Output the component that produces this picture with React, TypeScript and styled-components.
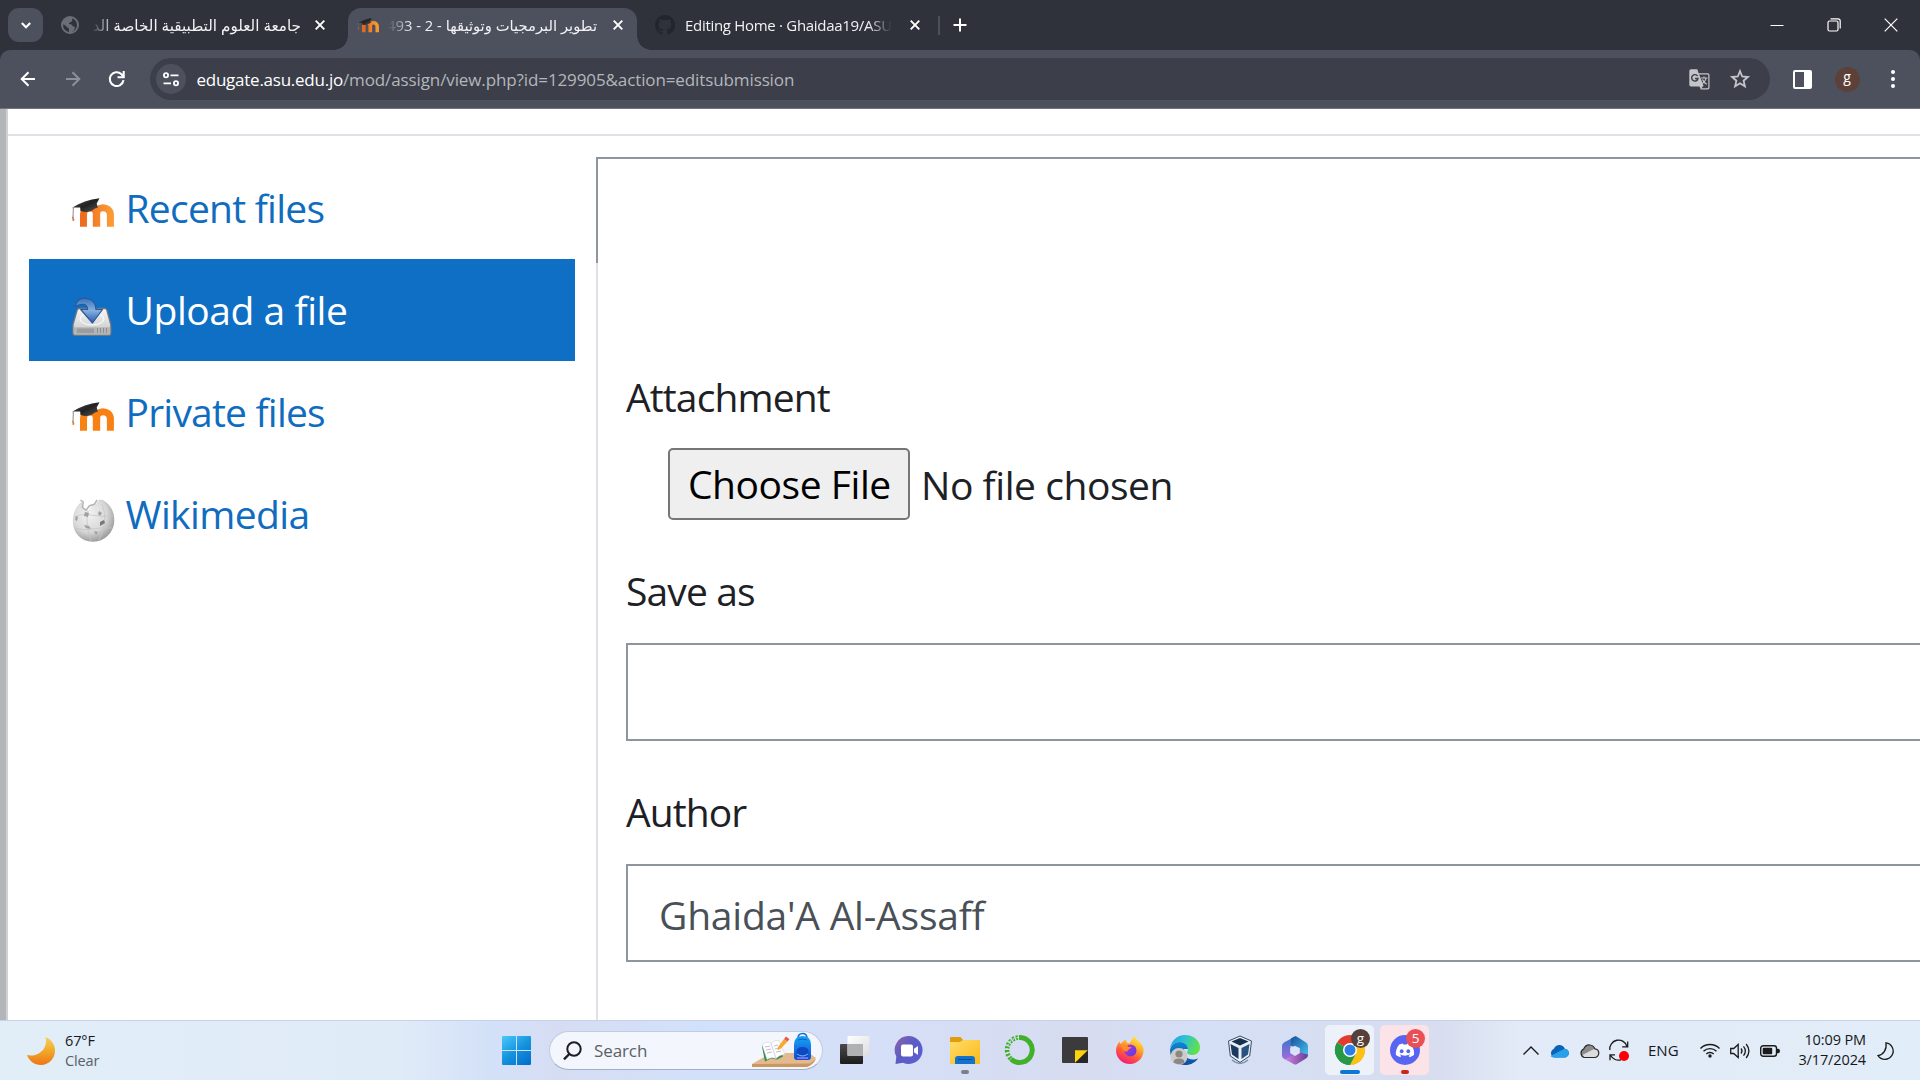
import React from "react";
import styled, { createGlobalStyle } from "styled-components";

const Global = createGlobalStyle`
  *, *::before, *::after { box-sizing: border-box; }
  body { margin: 0; background: #fff; overflow: hidden; font-family: "Open Sans", "Noto Sans", "DejaVu Sans", sans-serif; }
  svg { display: block; flex: none; overflow: visible; }
`;

const Screen = styled.div`
  display: flex;
  flex-direction: column;
  width: 1920px;
  height: 1080px;
  overflow: hidden;
`;

/* ---------- browser chrome ---------- */

const TabStrip = styled.header`
  display: flex;
  height: 50px;
  flex: none;
  padding-left: 8px;
  background: #2f323a;
`;

const TabSearch = styled.button`
  display: grid;
  place-items: center;
  width: 35px;
  height: 34px;
  margin: 8px 18px 0 0;
  padding: 0;
  border: 0;
  border-radius: 11px;
  background: #4d515e;
`;

const Tab = styled.div<{ $width: number; $active?: boolean }>`
  position: relative;
  display: flex;
  align-items: center;
  width: ${(p) => p.$width}px;
  height: 42px;
  margin-top: 8px;
  padding-bottom: 8px;
  border-radius: 13px 13px 0 0;
  background: ${(p) => (p.$active ? "#4d515e" : "transparent")};
  ${(p) =>
    p.$active &&
    `&::before, &::after {
      content: "";
      position: absolute;
      bottom: 0;
      width: 14px;
      height: 14px;
    }
    &::before { left: -14px; background: radial-gradient(circle at 0 0, transparent 13.5px, #4d515e 14px); }
    &::after { right: -14px; background: radial-gradient(circle at 100% 0, transparent 13.5px, #4d515e 14px); }`}
`;

const TabTitle = styled.div<{ $width: number; $rtl?: boolean; $size?: number; $gap: number }>`
  width: ${(p) => p.$width}px;
  margin-left: ${(p) => p.$gap}px;
  overflow: hidden;
  white-space: nowrap;
  color: #f1f2f4;
  font-size: ${(p) => p.$size ?? 15}px;
  line-height: 30px;
  direction: ${(p) => (p.$rtl ? "rtl" : "ltr")};
  letter-spacing: ${(p) => (p.$rtl ? "normal" : "-0.3px")};
  mask-image: linear-gradient(${(p) => (p.$rtl ? "to right" : "to left")}, transparent, #000 24px);
`;

const TabClose = styled.div<{ $gap: number }>`
  margin-left: ${(p) => p.$gap}px;
`;

const TabDivider = styled.div`
  width: 2px;
  height: 19px;
  margin: 16px 13px 0 8px;
  background: #4d515e;
`;

const NewTab = styled.div`
  padding-top: 18px;
`;

const WindowButtons = styled.div`
  display: flex;
  align-items: center;
  gap: 43px;
  height: 49px;
  margin-left: auto;
  padding-right: 22px;
`;

const ToolbarBack = styled.div`
  flex: none;
  background: #2f323a;
`;

const Toolbar = styled.div`
  display: flex;
  align-items: center;
  height: 59px;
  padding-left: 18px;
  border-bottom: 1px solid #70747f;
  border-radius: 10px 10px 0 0;
  background: #4d515e;
`;

const NavIcons = styled.div`
  display: flex;
  gap: 24.5px;
  width: 132px;
`;

const Omnibox = styled.div`
  display: flex;
  align-items: center;
  width: 1620px;
  height: 42px;
  padding-left: 6px;
  border-radius: 21px;
  background: #3c3f49;
`;

const SiteInfo = styled.div`
  display: grid;
  place-items: center;
  width: 30px;
  height: 30px;
  border-radius: 50%;
  background: #4d515e;
`;

const Url = styled.div`
  flex: 1;
  margin-left: 10.5px;
  color: #b3b6bc;
  font-size: 17px;
  letter-spacing: -0.11px;
  white-space: nowrap;
`;

const Host = styled.span`
  color: #fff;
  letter-spacing: -0.25px;
`;

const OmniIcons = styled.div`
  display: flex;
  align-items: center;
  gap: 20px;
  padding-right: 20px;
`;

const ToolbarEnd = styled.div`
  display: flex;
  align-items: center;
  margin-left: 22.5px;
`;

const Avatar = styled.div`
  display: grid;
  place-items: center;
  width: 25px;
  height: 25px;
  margin: 0 31px 0 23px;
  border-radius: 50%;
  background: #5d4037;
  color: #fff;
  font-size: 14px;
  line-height: 20px;
  padding-bottom: 5px;
`;

/* ---------- page ---------- */

const Page = styled.main`
  display: flex;
  flex: 1;
  min-height: 0;
  background: #fff;
`;

const Backdrop = styled.div`
  width: 8px;
  border-right: 2px solid #d0d1d2;
  background: #b2b6b9;
`;

const Dialog = styled.section`
  display: flex;
  flex-direction: column;
  flex: 1;
`;

const DialogTop = styled.div`
  height: 27px;
  border-bottom: 2px solid #dee2e6;
`;

const DialogBody = styled.div`
  display: flex;
  flex: 1;
  padding: 21px 0 0 21px;
`;

const RepoList = styled.nav`
  width: 567px;
`;

const Repo = styled.a<{ $active?: boolean; $spacing: number }>`
  display: flex;
  align-items: center;
  gap: 11.5px;
  width: 546px;
  height: 102px;
  padding: 0 0 2px 43px;
  background: ${(p) => (p.$active ? "#0f6fc5" : "transparent")};
  color: ${(p) => (p.$active ? "#fff" : "#0f6cbf")};
  font-size: 39px;
  letter-spacing: ${(p) => p.$spacing}px;
  white-space: nowrap;
`;

const RepoIcon = styled.span<{ $top: number }>`
  width: 42px;
  padding-top: ${(p) => p.$top}px;
`;

const FormPane = styled.div`
  flex: 1;
  display: flex;
  flex-direction: column;
`;

const PaneTop = styled.div`
  height: 106px;
  border: solid #8f959e;
  border-width: 2px 0 0 2px;
`;

const Form = styled.form`
  flex: 1;
  padding: 110px 0 0 28px;
  border-left: 2px solid #dee2e6;
`;

const Label = styled.label<{ $spacing: number }>`
  display: block;
  height: 48px;
  color: #1d2125;
  font-size: 39px;
  line-height: 48px;
  letter-spacing: ${(p) => p.$spacing}px;
`;

const FileRow = styled.div`
  display: flex;
  align-items: flex-start;
  padding: 27px 0 46px 42px;
`;

const ChooseButton = styled.button`
  width: 242px;
  height: 72px;
  padding: 0 0 0 18px;
  border: 2px solid #767676;
  border-radius: 5px;
  background: #efefef;
  color: #000;
  font: 39px/68px "Open Sans", sans-serif;
  text-align: left;
  letter-spacing: -0.45px;
  white-space: nowrap;
`;

const FileName = styled.span`
  margin-left: 11px;
  color: #1d2125;
  font-size: 39px;
  line-height: 73px;
  letter-spacing: -0.45px;
`;

const TextInput = styled.div`
  height: 98px;
  margin: 28px 0 47px;
  padding-left: 31px;
  border: 2px solid #8f959e;
  border-right: 0;
  color: #495057;
  font-size: 39px;
  line-height: 97px;
  letter-spacing: -0.22px;
`;

/* ---------- taskbar ---------- */

const Taskbar = styled.footer`
  display: flex;
  flex: none;
  height: 60px;
  border-top: 1px solid #c6d2e8;
  background: linear-gradient(90deg, #e1edf7 0, #e0ebf8 400px, #d3e1f8 490px, #d6ddf3 560px, #d2e1fa 700px, #d5dff7 880px, #d7dcf0 1080px, #d5dff5 1200px, #d8ddef 1440px, #e2ebf7 1520px, #e1edf8 1920px);
`;

const Weather = styled.div`
  display: flex;
  align-items: center;
  gap: 10px;
  width: 502px;
  padding-left: 27px;
`;

const Lines = styled.div<{ $end?: boolean }>`
  display: flex;
  flex-direction: column;
  padding-top: ${(p) => (p.$end ? 0 : 1)}px;
  padding-bottom: ${(p) => (p.$end ? 1 : 0)}px;
  color: #16181b;
  font-size: 14.5px;
  line-height: 20px;
  letter-spacing: -0.12px;
  text-align: ${(p) => (p.$end ? "right" : "left")};
`;

const Muted = styled.span`
  color: #5a6068;
`;

const StartButton = styled.div`
  width: 47px;
  padding-top: 15px;
`;

const SearchBox = styled.div`
  display: flex;
  align-items: center;
  width: 274px;
  height: 39px;
  margin: 10px 4px 0 0;
  padding: 0 2px 0 13px;
  border: 1px solid #c0cbe4;
  border-bottom-color: #a2adc6;
  border-radius: 20px;
  background: #f3f6fd;
`;

const SearchText = styled.span`
  flex: 1;
  margin-left: 12px;
  color: #5b5f66;
  font-size: 17px;
  letter-spacing: -0.1px;
`;

const Apps = styled.div`
  display: flex;
`;

const AppTile = styled.div<{ $tint?: string }>`
  position: relative;
  display: grid;
  place-items: center;
  width: 49px;
  height: 50px;
  margin: 4px 3px 0;
  border-radius: 5px;
  background: ${(p) => p.$tint ?? "transparent"};
`;

const Running = styled.i<{ $width: number; $color: string }>`
  position: absolute;
  left: calc(50% - ${(p) => p.$width / 2}px);
  bottom: 1px;
  width: ${(p) => p.$width}px;
  height: 4px;
  border-radius: 2px;
  background: ${(p) => p.$color};
`;

const Badge = styled.b<{ $color: string }>`
  position: absolute;
  top: 4px;
  right: 4px;
  width: 19px;
  height: 19px;
  border-radius: 50%;
  background: ${(p) => p.$color};
  color: #fff;
  font-size: 13.5px;
  font-weight: 500;
  line-height: 18px;
  text-align: center;
`;

const Tray = styled.div`
  display: flex;
  align-items: center;
  margin-left: auto;
  padding-right: 26px;
`;

const TrayIcons = styled.div<{ $gap: number; $after: number }>`
  display: flex;
  align-items: center;
  gap: ${(p) => p.$gap}px;
  margin-right: ${(p) => p.$after}px;
`;

const Lang = styled.span`
  width: 52px;
  padding-bottom: 2px;
  color: #16181b;
  font-size: 15px;
`;

const ClockWrap = styled.div`
  width: 88px;
  margin-right: 11px;
`;

/* ---------- drawings ---------- */

const Close = () => (
  <svg width="10" height="10" viewBox="0 0 10 10" stroke="#fff" strokeWidth="1.9"><path d="M.7.7l8.6 8.6M9.3.7L.7 9.3" /></svg>
);

const MoodleMark = ({ width, id, from, to }: { width: number; id: string; from: string; to: string }) => (
  <svg width={width} height={(width * 29) / 42} viewBox="0 0 42 29">
    <defs>
      <linearGradient id={id}><stop stopColor={from} /><stop offset="1" stopColor={to} /></linearGradient>
      <linearGradient id={id + "c"} x2="1" y2="1"><stop stopColor="#555" /><stop offset=".5" stopColor="#222" /><stop offset="1" stopColor="#555" /></linearGradient>
    </defs>
    <path d="M11.5 28.7V17c0-5 2.6-7.3 6-7.3S24.300 12 24.300 16v12.700M24.700 28.700V16c0-4 2.500-6.300 6.200-6.300s7.500 2.300 7.500 7.300v11.700" fill="none" stroke={`url(#${id})`} strokeWidth="7" />
    <path d="M.5 9.500C8 4.500 17 1.500 27.500.2L24.700 5.400l1.200 4.200-3.500 1.200c-4 3.600-9 4.200-14 2L8.200 9.600z" fill={`url(#${id}c)`} />
    <path d="M1.200 9.300C1.800 14 .2 17 1.800 22.300" fill="none" stroke="#777" strokeWidth=".9" />
    <path d="M.4 18.500l.7 4.500.9-1.500" fill="none" stroke={from} strokeWidth=".9" />
  </svg>
);

const UploadDrive = () => (
  <svg width="40" height="40" viewBox="0 0 40 40">
    <defs>
      <linearGradient id="drv" x2="0" y2="1"><stop stopColor="#f7f7f7" /><stop offset="1" stopColor="#c3c5c6" /></linearGradient>
      <linearGradient id="arr" x2="0" y2="1"><stop stopColor="#3c72b8" /><stop offset=".5" stopColor="#83b0e2" /><stop offset="1" stopColor="#2a5aa6" /></linearGradient>
    </defs>
    <path d="M7 11.500h26q1.200 0 1.800 1.500l4 14.500v9q0 1.700-1.700 1.700H2.800Q1 38.200 1 36.500v-9L5.200 13q.5-1.500 1.800-1.500z" fill="url(#drv)" stroke="#73777a" strokeWidth="1.300" />
    <ellipse cx="20" cy="22" rx="12" ry="6" fill="none" stroke="#fff" />
    <path d="M1.700 30.300h36.600v6.200q0 1-1 1H2.700q-1 0-1-1z" fill="#b3b5b6" />
    <path d="M5 31.500h17v4.500H5z" fill="#9a9da0" />
    <path d="M25.500 31v5M28.500 31v5M31.500 31v5M34.500 31v5" stroke="#8b8f92" />
    <path d="M3.500 9.500C4.500 3 9 .8 14 1.300c6.500.7 10 4.700 10 11.200h6.500L20.500 26 8.700 12.500h6.800c0-5-4.500-7-12-3z" fill="url(#arr)" stroke="#285a9e" strokeWidth="1.200" strokeLinejoin="round" />
  </svg>
);

const WikiGlobe = () => (
  <svg width="43" height="43" viewBox="0 0 43 43">
    <defs><radialGradient id="wg" cx=".4" cy=".35" r=".7"><stop stopColor="#f2f2f2" /><stop offset=".6" stopColor="#d8d8d8" /><stop offset="1" stopColor="#929292" /></radialGradient></defs>
    <path d="M10 2.500C4 7 .8 14 .8 21.500.8 34 9 42.700 21 42.700S42.300 33 42.300 21c0-9-4.300-16-11.500-20L27 .5l-3 4.500-4 1-3 5-5-1z" fill="url(#wg)" />
    <path d="M8.500 1l2.700 2-.8 5.500 3.600 2.700 3.500-4.500 5-1.500L25 1" fill="none" stroke="#b4b4b4" strokeWidth="1.500" />
    <g fill="none" stroke="#c6c6c6" strokeWidth=".8"><path d="M2 18q8-4 17-2t22 1M3 29q8 3 18 1t19-1M16 12q-3 14 3 30M30 5q7 16-3 36" /></g>
    <g fill="#a0a0a0"><path d="M13 13l4 1-1 4-4-1zM27 12l3 2-2 3-2-2zM12 26l5 1 2 3-5-1zM4 17l2 1-1 4-2-1zM22 32l4 1-2 3z" /><path d="M28 23l4-2 1 3-5 3z" fill="#777" /></g>
  </svg>
);

const Globe = () => (
  <svg width="18" height="18" viewBox="0 0 18 18">
    <circle cx="9" cy="9" r="8" fill="none" stroke="#6b6f75" strokeWidth="2" />
    <path d="M2 6C4 2.500 8 1 11.500 2.200 10.500 3.500 12 4 10.500 5.500S8 6 8 8c2 .3 3.500.5 3.500 2.200 1 .3 2.200.2 2.500 1.300-.5 2-1.500 3.500-3.500 4.500L8 16.500c.5-2-.5-3-.3-4.500C5 11.500 5.500 9 2 8.500z" fill="#6b6f75" />
  </svg>
);

const GitHub = () => (
  <svg width="20" height="20" viewBox="0 0 16 16" fill="#22262b">
    <path d="M8 0C3.580 0 0 3.580 0 8c0 3.540 2.290 6.530 5.470 7.590.4.070.55-.17.55-.38 0-.19-.01-.82-.01-1.490-2.010.37-2.530-.49-2.690-.94-.09-.23-.48-.94-.82-1.130-.28-.15-.68-.52-.01-.53.63-.01 1.080.58 1.230.82.72 1.210 1.870.87 2.330.66.070-.52.28-.87.51-1.070-1.780-.2-3.640-.89-3.640-3.950 0-.87.31-1.590.82-2.150-.08-.2-.36-1.020.08-2.120 0 0 .67-.21 2.200.82A7.600 7.600 0 018 3.870c.68 0 1.360.09 2 .27 1.530-1.040 2.200-.82 2.200-.82.44 1.100.16 1.920.08 2.120.51.56.82 1.270.82 2.150 0 3.070-1.870 3.750-3.650 3.950.29.25.54.73.54 1.480 0 1.070-.01 1.930-.01 2.200 0 .21.15.46.55.38A8.010 8.010 0 0016 8c0-4.420-3.580-8-8-8z" />
  </svg>
);

const BackArrow = ({ color, flip }: { color: string; flip?: boolean }) => (
  <svg width="20" height="20" viewBox="0 0 20 20" fill="none" stroke={color} strokeWidth="2">
    <path d={flip ? "M3 10h13M9.500 3.200L16.300 10l-6.800 6.800" : "M17 10H4M10.500 3.200L3.700 10l6.800 6.800"} />
  </svg>
);

const Reload = () => (
  <svg width="20" height="20" viewBox="0 0 20 20" fill="none" stroke="#fff" strokeWidth="2.100">
    <path d="M16.500 11.200A6.900 6.900 0 1 1 14.300 5l2.300 2.700" /><path d="M16.700 2v6.200H10.500" />
  </svg>
);

const Tune = () => (
  <svg width="16" height="15" viewBox="0 0 16 15" fill="none" stroke="#fff" strokeWidth="1.800">
    <circle cx="3" cy="3.300" r="2.100" /><path d="M7.500 3.300h8M.5 11.300h7.500" /><circle cx="13" cy="11.300" r="2.100" />
  </svg>
);

const Translate = () => (
  <svg width="21" height="21" viewBox="0 0 21 21">
    <path d="M2 .3h6.300l1.300 4h9.200q1.700 0 1.700 1.700v12.700q0 1.700-1.700 1.700h-7l-1.300-3H2Q.3 17.400.3 15.700V2Q.3.300 2 .300z" fill="#c4c5c8" />
    <path d="M10.200 5.600h8.300q.8 0 .8.800v12q0 .8-.8.800h-6.200l2.200-2.400z" fill="#3c3f49" />
    <path d="M8.600 7.200A3.200 3.200 0 1 0 9 9.500H6" fill="none" stroke="#3c3f49" strokeWidth="1.400" />
    <path d="M12 9h6.500M15 7.500V9M17.200 9c-.5 2.500-2 4.300-4 5.700M13.500 10.500c.7 1.800 2.200 3.500 4.200 4.700" fill="none" stroke="#c4c5c8" strokeWidth="1.200" />
  </svg>
);

const Star = () => (
  <svg width="20" height="20" viewBox="0 0 20 20" fill="none" stroke="#c4c5c8" strokeWidth="1.800">
    <path d="M10 2.200l2.200 5.300 5.700.5-4.300 3.700 1.300 5.600L10 14.300l-4.900 3 1.300-5.600L2.100 8l5.700-.5z" />
  </svg>
);

const SidePanel = () => (
  <svg width="19" height="19" viewBox="0 0 19 19"><path d="M2 1h15q1 0 1 1v15q0 1-1 1H2q-1 0-1-1V2q0-1 1-1z" fill="none" stroke="#fff" strokeWidth="2" /><path d="M11 1h7v17h-7z" fill="#fff" /></svg>
);

const Dots = () => (
  <svg width="4" height="18" viewBox="0 0 4 18" fill="#fff"><circle cx="2" cy="2" r="2" /><circle cx="2" cy="9" r="2" /><circle cx="2" cy="16" r="2" /></svg>
);

const MoonColor = () => (
  <svg width="28" height="28" viewBox="0 0 28 28">
    <defs><linearGradient id="moon" x2="0" y2="1"><stop stopColor="#f8cf62" /><stop offset=".45" stopColor="#f0ae2c" /><stop offset="1" stopColor="#ee7516" /></linearGradient></defs>
    <path d="M18.500 0C24.500 2.500 28 7.500 28 13.500 28 21.500 22 28 14 28 7.500 28 2 24 0 18c10 2.500 21.500-5 18.500-18z" fill="url(#moon)" />
  </svg>
);

const WindowsLogo = () => (
  <svg width="29" height="29" viewBox="0 0 29 29">
    <defs><linearGradient id="win" gradientUnits="userSpaceOnUse" x1="0" y1="0" x2="22" y2="29"><stop stopColor="#4cc8fb" /><stop offset=".55" stopColor="#1594de" /><stop offset="1" stopColor="#0473ce" /></linearGradient></defs>
    <path d="M1 0h13v14H0V1q0-1 1-1zM15 0h13q1 0 1 1v13H15zM0 15h14v14H1q-1 0-1-1zM15 15h14v13q0 1-1 1H15z" fill="url(#win)" />
  </svg>
);

const Magnifier = () => (
  <svg width="19" height="19" viewBox="0 0 19 19" fill="none" stroke="#1d1f22" strokeWidth="2"><circle cx="11" cy="8" r="6.700" /><path d="M6.300 13L1 18.300" strokeWidth="2.400" /></svg>
);

const SchoolArt = () => (
  <svg width="69" height="37" viewBox="0 0 69 37">
    <defs><linearGradient id="bag" x2="0" y2="1"><stop stopColor="#19a4f6" /><stop offset="1" stopColor="#0b4fd0" /></linearGradient></defs>
    <path d="M1 32L20 21h38l7 5q-2 5-6 6z" fill="#e3b98d" /><path d="M1 32l58-.5 6-4.500q-3 6-9 8H1z" fill="#c9975f" />
    <path d="M11 13l5-3 5 1 6-3 5 15-6 3-6-1-6 3z" fill="#2f8f49" transform="translate(0 1.500)" />
    <path d="M11 12.500q5-4 9-1l5 15q-5-2-9 1zM20 11.500q3-4 8-3l6 14q-5 0-9 4z" fill="#fff" stroke="#c9c4d8" strokeWidth=".5" />
    <path d="M14 15l5-1M15 18l5-1M16 21l5-1M23 14l4-1M24 17l4-1M25 20l5-1" stroke="#b5a9c8" strokeWidth=".8" />
    <path d="M27 15L33 7l3.500 2.600L30 16.500l-3.500 1.700z" fill="#f7a92f" /><path d="M33 7l2-2.500 3.500 2.700-2 2.400z" fill="#ee5646" />
    <path d="M47 6.500q0-5 4.500-5t4.500 5" fill="none" stroke="#1670d8" strokeWidth="1.600" />
    <path d="M43 13q0-9 8.500-9T60 13v12q0 3-3 3H46q-3 0-3-3z" fill="url(#bag)" />
    <path d="M45.500 20q0-5 6-5t6 5v4q0 2-2 2h-8q-2 0-2-2z" fill="#1247c4" /><path d="M46 22q5.500 4 11 0" stroke="#6fc3ff" fill="none" /><path d="M47 8q4.500-2 9 0" stroke="#0b5ed0" fill="none" />
    <path d="M46 26h11" stroke="#c78cf5" strokeWidth="1.200" />
  </svg>
);

const TaskView = () => (
  <svg width="30" height="28" viewBox="0 0 30 28">
    <defs>
      <linearGradient id="tv1" x2="0" y2="1"><stop stopColor="#4a4a4a" /><stop offset="1" stopColor="#1c1c1c" /></linearGradient>
      <linearGradient id="tv2" x2="1" y2="1"><stop stopColor="#fff" /><stop offset="1" stopColor="#dcdddf" /></linearGradient>
    </defs>
    <rect y="8" width="23" height="20" rx="1" fill="url(#tv1)" /><rect x="7.500" width="22" height="20" rx="1" fill="url(#tv2)" /><path d="M7.500 8H23v12H8.500q-1 0-1-1z" fill="#b0b1b3" />
  </svg>
);

const Chat = () => (
  <svg width="29" height="29" viewBox="0 0 29 29">
    <defs><linearGradient id="chat" x2="1" y2=".8"><stop stopColor="#8f62a8" /><stop offset=".5" stopColor="#5c5cc4" /><stop offset="1" stopColor="#5a5fd0" /></linearGradient></defs>
    <path d="M14.500 0A14 14 0 1 1 8 26.800L.5 28 1.300 20.500A14 14 0 0 1 14.500 0z" fill="url(#chat)" />
    <rect x="6" y="8.500" width="12" height="12" rx="2" fill="#fff" /><path d="M19 12.700l4-2.700v9l-4-2.700z" fill="#fff" />
  </svg>
);

const Folder = () => (
  <svg width="30" height="27" viewBox="0 0 30 27">
    <defs><linearGradient id="fold" x2="1" y2="1"><stop stopColor="#ffdc6a" /><stop offset="1" stopColor="#fcb918" /></linearGradient></defs>
    <path d="M1 0h9.500l2.500 3H29q1 0 1 1v4H0V1q0-1 1-1z" fill="#e19c0c" /><path d="M0 5h10l3-2h16q1 0 1 1v22q0 1-1 1H0z" fill="url(#fold)" />
    <path d="M5 27v-5q0-3 3-3h14q3 0 3 3v5z" fill="#1173cc" /><path d="M8 22.500h14" stroke="#0b4f92" />
  </svg>
);

const Anaconda = () => (
  <svg width="30" height="30" viewBox="0 0 30 30" fill="none" stroke="#43b02a">
    <path d="M14 2.500A12.500 12.500 0 1 1 6 24" strokeWidth="5" /><path d="M13 2.500A12.500 12.500 0 0 0 6 24" strokeWidth="4.600" strokeDasharray="2.200 1.400" />
    <path d="M13 2.500A12.500 12.500 0 0 0 6 24" strokeWidth="1.200" stroke="#d6def4" strokeDasharray="1.500 2.500" />
  </svg>
);

const Sticky = () => (
  <svg width="26" height="26" viewBox="0 0 26 26"><rect width="26" height="26" rx="1" fill="#3b3b3d" /><path d="M13 26V13.300h13z" fill="#fbd40b" /><path d="M13 26h12q1 0 1-1V13.300z" fill="#28282a" /></svg>
);

const Firefox = () => (
  <svg width="28" height="28" viewBox="0 0 28 28">
    <defs>
      <linearGradient id="ff" x1=".8" x2=".3" y2="1"><stop stopColor="#fff04a" /><stop offset=".35" stopColor="#ffb02a" /><stop offset=".65" stopColor="#ff5b3a" /><stop offset="1" stopColor="#f0187c" /></linearGradient>
      <linearGradient id="ffp" x2="1" y2="1"><stop stopColor="#b833d8" /><stop offset="1" stopColor="#5b3ce0" /></linearGradient>
    </defs>
    <path d="M18.500 0c1 4 7.500 6 9 12.500C28.500 21 22 28 14 28S0 22 0 14.500C0 11 1.500 8 3.500 5.500c.3 1.500.8 2 1.500 2.500C6 6 8 4 10 4c0 2 1 3 3.500 3.300C15.500 5 16 2 18.500 0z" fill="url(#ff)" />
    <circle cx="14.500" cy="14.500" r="6" fill="url(#ffp)" /><path d="M5 9.500c3-2 6-1 7.500 1.500h3c-1 2.500-4 2-4 4.500-3.500 0-5.500-2-6.500-6z" fill="#ff8b22" />
  </svg>
);

const Edge = () => (
  <svg width="30" height="30" viewBox="0 0 30 30">
    <defs>
      <linearGradient id="eg" x2="1" y2=".3"><stop stopColor="#1b9de2" /><stop offset=".5" stopColor="#2bc3d2" /><stop offset="1" stopColor="#5fe04e" /></linearGradient>
      <linearGradient id="eb" x2="0" y2="1"><stop stopColor="#0e86d6" /><stop offset="1" stopColor="#0c4f9c" /></linearGradient>
    </defs>
    <path d="M0 14C1 6 7 0 15 0c9 0 15 6 15 12.500 0 5-4 7.500-8 7.500-3 0-5-1-5-2.500 0-1 1-1.500 1-3.500C18 10 14 7 9.500 7 5 7 1 10 0 14z" fill="url(#eg)" />
    <path d="M0 15C1 10 5 7 9.500 7c4.500 0 8.500 3 8.500 7h-4c-2 5 2 10.500 9 10.500 2 0 3.500-.5 5-1.300C26 27 21 30 15 30 7 30 0 24 0 15z" fill="url(#eb)" />
    <circle cx="9" cy="21.500" r="8.500" fill="#cdcbc9" /><circle cx="9" cy="19" r="3.600" fill="#8a8785" /><path d="M3.500 27.500q0-4 5.500-4t5.500 4Q9 31 3.500 27.500z" fill="#8a8785" />
  </svg>
);

const VBox = () => (
  <svg width="26" height="28" viewBox="0 0 26 28">
    <path d="M5 24q8 7 16 0" fill="none" stroke="#7d8faa" strokeWidth="1.500" />
    <path d="M13 0l11.500 5-1.800 15L13 26.500 3.300 20 1.500 5z" fill="#e9eff7" stroke="#3b4b66" /><path d="M13 2l8.500 3.500L13 9.500 4.500 5.500z" fill="#16304f" /><path d="M3.500 8l8 4v11l-6.500-4.500z" fill="#1b3a60" /><path d="M22.500 8l-8 4v11l6.500-4.500z" fill="#2a5280" />
  </svg>
);

const M365 = () => (
  <svg width="26" height="29" viewBox="0 0 26 29">
    <defs>
      <linearGradient id="m1" x2="0" y2="1"><stop stopColor="#3277c4" /><stop offset="1" stopColor="#a66be0" /></linearGradient>
      <linearGradient id="m2" x2="1" y2="1"><stop stopColor="#174e98" /><stop offset="1" stopColor="#45c3f2" /></linearGradient>
      <linearGradient id="m3" x2="1" y2="0"><stop stopColor="#cf86df" /><stop offset="1" stopColor="#6a3c97" /></linearGradient>
    </defs>
    <path d="M14 0L2 6.500Q0 7.700 0 10v9.500q0 2.300 2 3.300l4 2 7-5-4.500-3V10z" fill="url(#m1)" /><path d="M9 2.500l3-1.800q1.500-.9 3 0l9 5.800q2 1.200 2 3.500v9.500l-8.500-3.200V12L8.500 10z" fill="url(#m2)" /><path d="M3 23.300l14.500-7 8.500 2.200V19q0 2.300-2 3.400L15 28q-1.700 1-3.400 0z" fill="url(#m3)" />
    <path d="M13 9.700l4.700 2.600v5L13 20l-4.700-2.700v-5z" fill="#dbe1f6" />
  </svg>
);

const Chrome = () => (
  <svg width="30" height="30" viewBox="0 0 30 30">
    <path d="M15 15L2 7.500A15 15 0 0 1 28 7.500z" fill="#e33b2e" /><path d="M15 15L28 7.500A15 15 0 0 1 15 30z" fill="#fbc116" /><path d="M15 15v15A15 15 0 0 1 2 7.500z" fill="#279847" />
    <path d="M15 8h13.300A15 15 0 0 1 15 30l6-11.500z" fill="#fbc116" /><path d="M2 7.500l6.500 11L15 22l6-3.500L15 30A15 15 0 0 1 2 7.500z" fill="#279847" />
    <circle cx="15" cy="15" r="7" fill="#fff" /><circle cx="15" cy="15" r="5.500" fill="#2b7de9" />
  </svg>
);

const Discord = () => (
  <svg width="30" height="30" viewBox="0 0 30 30">
    <circle cx="15" cy="15" r="15" fill="#5865f2" />
    <path d="M20.800 9.600a14 14 0 0 0-3.600-1.100l-.5 1a13 13 0 0 0-3.400 0l-.5-1a14 14 0 0 0-3.600 1.100C6.500 13 5.500 16.500 5.900 20a14 14 0 0 0 4.400 2.200l1-1.500-1.500-.8.400-.3c3 1.400 6.400 1.400 9.400 0l.4.300-1.500.8 1 1.500A14 14 0 0 0 24 20c.5-4-.7-7.400-3.200-10.400z" fill="#fff" />
    <ellipse cx="11.700" cy="16.300" rx="1.900" ry="2" fill="#5865f2" /><ellipse cx="18.300" cy="16.300" rx="1.900" ry="2" fill="#5865f2" />
  </svg>
);

const cloud = "M5 13.500a4.600 4.600 0 0 1-.3-8.500C6 2 8.500.7 11 1c2.500.2 4 1.700 4.800 3.800 2.600.3 4 2 4 4.200s-1.700 4.500-4.300 4.500z";
const Cloud = ({ top, base, line }: { top: string; base: string; line?: string }) => (
  <svg width="20" height="14" viewBox="0 0 20 14"><path d={cloud} fill={top} /><path d="M1.500 12L11 7l4.700-2.200c2.800.2 4.100 2 4.100 4.200s-1.700 4.500-4.300 4.500H5q-2 0-3.500-1.500z" fill={base} />{line && <path d={cloud} fill="none" stroke={line} strokeWidth="1.200" />}</svg>
);

const Sync = () => (
  <svg width="20" height="20" viewBox="0 0 20 20" fill="none" stroke="#1b1b1b" strokeWidth="1.300">
    <path d="M.8 9A8.800 8.800 0 0 1 18 5.500M18.700.5v5.300h-5.500M6 13.800H1v5.500M1.700 14.500A8.800 8.800 0 0 0 12 18.800" /><circle cx="15" cy="15" r="5" fill="#fb0007" stroke="none" />
  </svg>
);

const Wifi = () => (
  <svg width="20" height="15" viewBox="0 0 20 15" fill="none" stroke="#1b1b1b" strokeWidth="1.400">
    <path d="M.5 5.500a13.400 13.400 0 0 1 19 0M3.500 8.300a9.200 9.200 0 0 1 13 0M6.300 11a5.300 5.300 0 0 1 7.400 0" /><circle cx="10" cy="13" r="1.700" fill="#1b1b1b" stroke="none" />
  </svg>
);

const Sound = () => (
  <svg width="20" height="16" viewBox="0 0 20 16" fill="none" stroke="#1b1b1b" strokeWidth="1.300">
    <path d="M.7 5.500h3l4.500-4v13l-4.500-4h-3zM11 5.500q2 2.500 0 5M13.500 3.300q3.700 4.700 0 9.400M16.200 1q5.400 7 0 14" />
  </svg>
);

const Battery = () => (
  <svg width="20" height="12" viewBox="0 0 20 12"><rect x=".7" y=".7" width="15.800" height="10.600" rx="2.500" fill="none" stroke="#1b1b1b" strokeWidth="1.400" /><rect x="2.700" y="2.700" width="9.500" height="6.600" rx="1" fill="#1b1b1b" /><path d="M17 3.700h1q2 0 2 2.300t-2 2.300h-1z" fill="#1b1b1b" /></svg>
);

export default function App() {
  return (
    <Screen>
      <Global />
      <TabStrip>
        <TabSearch><svg width="10" height="7" viewBox="0 0 10 7" fill="none" stroke="#fff" strokeWidth="2.100"><path d="M.8 1L5 5.200 9.200 1" /></svg></TabSearch>
        <Tab $width={287}>
          <Globe />
          <TabTitle $width={210} $gap={12} $rtl $size={15.2}>جامعة العلوم التطبيقية الخاصة الد</TabTitle>
          <TabClose $gap={14}><Close /></TabClose>
        </Tab>
        <Tab $width={289} $active>
          <svg width="10" height="1" />
          <MoodleMark width={21} id="mt" from="#e8671b" to="#f79a31" />
          <TabTitle $width={209} $gap={9} $rtl $size={14.75}>تطوير البرمجيات وتوثيقها - 2 - 493</TabTitle>
          <TabClose $gap={16}><Close /></TabClose>
        </Tab>
        <Tab $width={292.5}>
          <svg width="18" height="1" />
          <GitHub />
          <TabTitle $width={207} $gap={10}>Editing Home · Ghaidaa19/ASU</TabTitle>
          <TabClose $gap={18}><Close /></TabClose>
        </Tab>
        <TabDivider />
        <NewTab><svg width="14" height="14" viewBox="0 0 14 14" stroke="#fff" strokeWidth="2"><path d="M7 .5v13M.5 7h13" /></svg></NewTab>
        <WindowButtons>
          <svg width="14" height="14" viewBox="0 0 14 14" stroke="#fff"><path d="M.5 7.500h13" /></svg>
          <svg width="14" height="14" viewBox="0 0 14 14" fill="none" stroke="#fff" strokeWidth="1.200"><rect x="1" y="3" width="10" height="10" rx="1.500" /><path d="M3.500.8H11q2.200 0 2.200 2.200v7.500" /></svg>
          <svg width="14" height="14" viewBox="0 0 14 14" stroke="#fff" strokeWidth="1.200"><path d="M.7.7l12.600 12.600M13.300.7L.7 13.300" /></svg>
        </WindowButtons>
      </TabStrip>
      <ToolbarBack>
        <Toolbar>
          <NavIcons>
            <BackArrow color="#fff" />
            <BackArrow color="#8d9099" flip />
            <Reload />
          </NavIcons>
          <Omnibox>
            <SiteInfo><Tune /></SiteInfo>
            <Url><Host>edugate.asu.edu.jo</Host>/mod/assign/view.php?id=129905&amp;action=editsubmission</Url>
            <OmniIcons><Translate /><Star /></OmniIcons>
          </Omnibox>
          <ToolbarEnd><SidePanel /><Avatar>g</Avatar><Dots /></ToolbarEnd>
        </Toolbar>
      </ToolbarBack>
      <Page>
        <Backdrop />
        <Dialog>
          <DialogTop />
          <DialogBody>
            <RepoList>
              <Repo $spacing={-0.75}><RepoIcon $top={11}><MoodleMark width={42} id="m-a" from="#ef6c1f" to="#fb9a35" /></RepoIcon>Recent files</Repo>
              <Repo $active $spacing={-0.45}><RepoIcon $top={15}><UploadDrive /></RepoIcon>Upload a file</Repo>
              <Repo $spacing={-0.79}><RepoIcon $top={11}><MoodleMark width={42} id="m-b" from="#f98012" to="#f98012" /></RepoIcon>Private files</Repo>
              <Repo $spacing={-0.62}><RepoIcon $top={14}><WikiGlobe /></RepoIcon>Wikimedia</Repo>
            </RepoList>
            <FormPane>
              <PaneTop />
              <Form>
                <Label $spacing={-0.87}>Attachment</Label>
                <FileRow><ChooseButton type="button">Choose File</ChooseButton><FileName>No file chosen</FileName></FileRow>
                <Label $spacing={-0.88}>Save as</Label>
                <TextInput />
                <Label $spacing={-0.9}>Author</Label>
                <TextInput>Ghaida'A Al-Assaff</TextInput>
              </Form>
            </FormPane>
          </DialogBody>
        </Dialog>
      </Page>
      <Taskbar>
        <Weather><MoonColor /><Lines><span>67°F</span><Muted>Clear</Muted></Lines></Weather>
        <StartButton><WindowsLogo /></StartButton>
        <SearchBox><Magnifier /><SearchText>Search</SearchText><SchoolArt /></SearchBox>
        <Apps>
          <AppTile><TaskView /></AppTile>
          <AppTile><Chat /></AppTile>
          <AppTile><Folder /><Running $width={8} $color="#7b7f88" /></AppTile>
          <AppTile><Anaconda /></AppTile>
          <AppTile><Sticky /></AppTile>
          <AppTile><Firefox /></AppTile>
          <AppTile><Edge /></AppTile>
          <AppTile><VBox /></AppTile>
          <AppTile><M365 /></AppTile>
          <AppTile $tint="#edf1fa"><Chrome /><Badge $color="#56403a">g</Badge><Running $width={20} $color="#0a78d4" /></AppTile>
          <AppTile $tint="#fbe3e8"><Discord /><Badge $color="#ea4f56">5</Badge><Running $width={8} $color="#c42b1c" /></AppTile>
        </Apps>
        <Tray>
          <TrayIcons $gap={12} $after={10}><svg width="16" height="9" viewBox="0 0 16 9" fill="none" stroke="#1b1b1b" strokeWidth="1.400"><path d="M.5 8.500L8 1l7.500 7.500" /></svg></TrayIcons>
          <TrayIcons $gap={10} $after={19}><Cloud top="#0a63b8" base="#28a1ea" /><Cloud top="#8b8b8b" base="#dcdcdc" line="#2a2a2a" /><Sync /></TrayIcons>
          <Lang>ENG</Lang>
          <TrayIcons $gap={10} $after={-2}><Wifi /><Sound /><Battery /></TrayIcons>
          <ClockWrap><Lines $end><span>10:09 PM</span><span>3/17/2024</span></Lines></ClockWrap>
          <svg width="17" height="18" viewBox="0 0 17 18" fill="none" stroke="#1b1b1b" strokeWidth="1.300"><path d="M9 .8A8.300 8.300 0 1 1 1 13.700C6.500 12.500 10 7.500 9 .8z" /></svg>
        </Tray>
      </Taskbar>
    </Screen>
  );
}
